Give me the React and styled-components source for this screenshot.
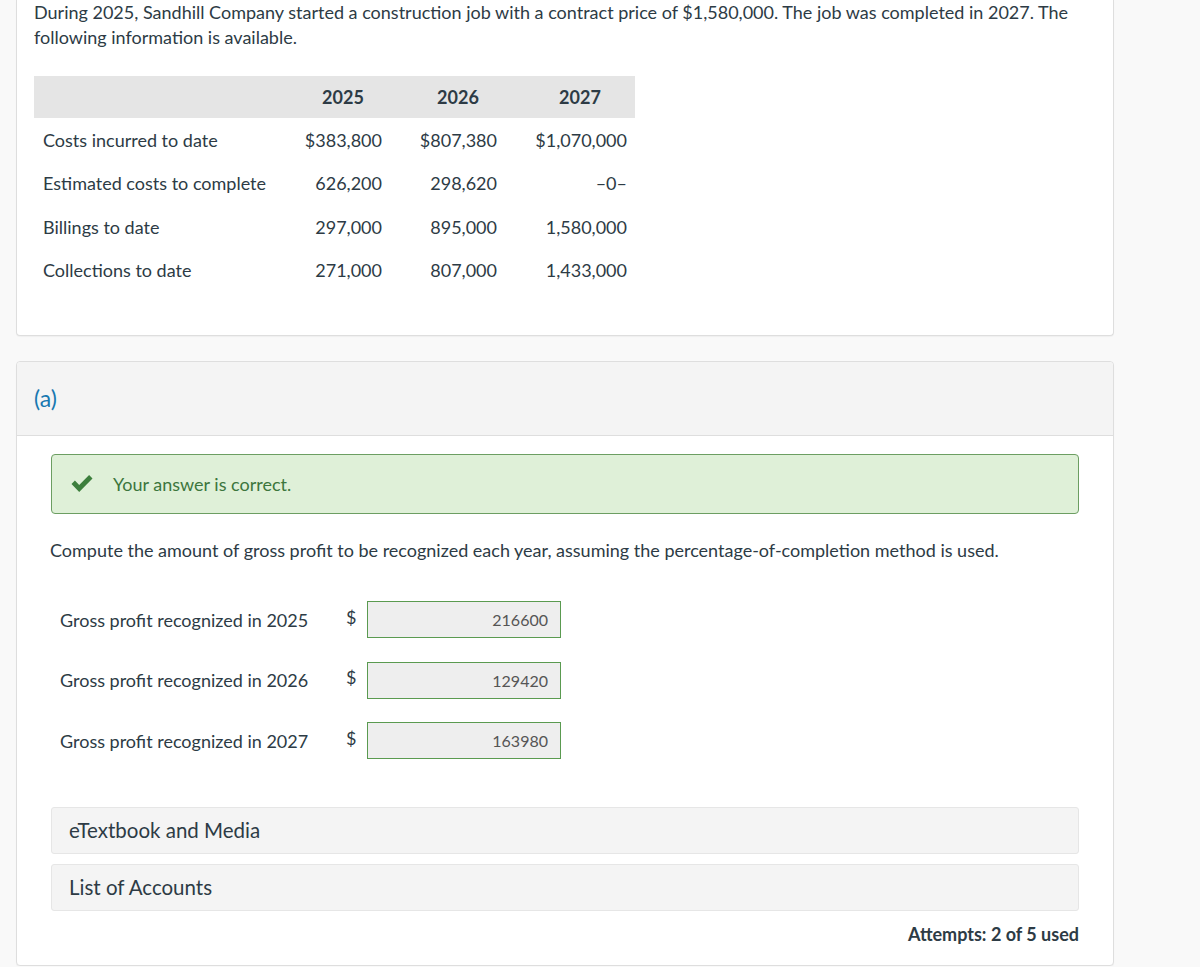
import React from 'react';
import styled, { createGlobalStyle } from 'styled-components';

const GlobalStyle = createGlobalStyle`
  body {
    margin: 0;
    background: #f9f9f9;
    font-family: Lato, "Open Sans", sans-serif;
    color: #2d3b45;
  }
`;

const rows = [
  { label: 'Costs incurred to date', values: ['$383,800', '$807,380', '$1,070,000'] },
  { label: 'Estimated costs to complete', values: ['626,200', '298,620', '\u20130\u2013'] },
  { label: 'Billings to date', values: ['297,000', '895,000', '1,580,000'] },
  { label: 'Collections to date', values: ['271,000', '807,000', '1,433,000'] },
];

const years = ['2025', '2026', '2027'];
const colPad = [9, 28, 8];

const answers = [
  { year: '2025', value: '216600' },
  { year: '2026', value: '129420' },
  { year: '2027', value: '163980' },
];

const App = () => {
  return (
    <Page>
      <GlobalStyle />
      <Card top>
        <Intro>
          During 2025, Sandhill Company started a construction job with a contract price of $1,580,000. The job was
          completed in 2027. The following information is available.
        </Intro>
        <Table>
          <HeadCell />
          {years.map((y) => (
            <HeadCell key={y}>{y}</HeadCell>
          ))}
          {rows.map((r) => (
            <React.Fragment key={r.label}>
              <LabelCell>{r.label}</LabelCell>
              {r.values.map((v, i) => (
                <ValueCell key={i} pad={colPad[i]}>
                  {v}
                </ValueCell>
              ))}
            </React.Fragment>
          ))}
        </Table>
      </Card>

      <Card>
        <PartHeader>(a)</PartHeader>
        <PartBody>
          <Alert>
            <svg width="22" height="17" viewBox="0 0 22 17">
              <path d="M0.5 9 L3.9 5.6 L8.2 9.9 L18.1 0 L21.5 3.4 L8.2 16.9 Z" fill="#3d7f3d" />
            </svg>
            <span>Your answer is correct.</span>
          </Alert>
          <Question>
            Compute the amount of gross profit to be recognized each year, assuming the percentage-of-completion method is
            used.
          </Question>
          <Answers>
            {answers.map((a) => (
              <AnswerRow key={a.year}>
                <AnswerLabel>Gross profit recognized in {a.year}</AnswerLabel>
                <Dollar>$</Dollar>
                <AnswerBox>{a.value}</AnswerBox>
              </AnswerRow>
            ))}
          </Answers>
          <Resources>
            <Resource>eTextbook and Media</Resource>
            <Resource>List of Accounts</Resource>
          </Resources>
          <Attempts>Attempts: 2 of 5 used</Attempts>
        </PartBody>
      </Card>
    </Page>
  );
};

export default App;

const Page = styled.div`
  width: 1098px;
  margin-left: 16px;
  display: flex;
  flex-direction: column;
  gap: 25px;
`;

const Card = styled.div`
  background: #fff;
  border: 1px solid #dedede;
  border-top: ${(p) => (p.top ? 'none' : '1px solid #dedede')};
  border-radius: ${(p) => (p.top ? '0 0 4px 4px' : '4px')};
  box-shadow: 0 1px 1px rgba(0, 0, 0, 0.04);
  padding-bottom: ${(p) => (p.top ? '41px' : '0')};
`;

const Intro = styled.p`
  margin: 0;
  padding: 0 30px 0 17px;
  font-size: 18px;
  line-height: 25px;
`;

const Table = styled.div`
  margin: 26px 0 0 17px;
  display: grid;
  grid-template-columns: 261px 96px 134px 110px;
  grid-auto-rows: 43.5px;
  font-size: 18px;
`;

const HeadCell = styled.div`
  background: #e5e5e5;
  font-weight: 700;
  display: flex;
  align-items: center;
  justify-content: center;
  height: 42px;
`;

const LabelCell = styled.div`
  display: flex;
  align-items: center;
  padding-left: 9px;
  padding-bottom: 3px;
`;

const ValueCell = styled.div`
  display: flex;
  align-items: center;
  justify-content: flex-end;
  padding-right: ${(p) => p.pad}px;
  padding-bottom: 3px;
`;

const PartHeader = styled.div`
  background: #f4f4f4;
  border-bottom: 1px solid #dedede;
  height: 73px;
  padding-left: 17px;
  display: flex;
  align-items: center;
  font-size: 23px;
  color: #1878b0;
  border-radius: 4px 4px 0 0;
`;

const PartBody = styled.div`
  padding: 18px 34px 20px 34px;
  display: flex;
  flex-direction: column;
`;

const Alert = styled.div`
  height: 58px;
  background: #dff0d8;
  border: 1px solid #6c9e62;
  border-radius: 4px;
  display: flex;
  align-items: center;
  gap: 20px;
  padding-left: 19px;
  font-size: 18px;
  color: #3c763d;
`;

const Question = styled.p`
  margin: 24px 0 0 -1px;
  font-size: 18px;
  line-height: 24px;
`;

const Answers = styled.div`
  margin-top: 39px;
  padding-left: 9px;
  display: flex;
  flex-direction: column;
  gap: 22.5px;
`;

const AnswerRow = styled.div`
  display: flex;
  align-items: center;
  height: 38px;
`;

const AnswerLabel = styled.div`
  width: 286px;
  font-size: 18px;
`;

const Dollar = styled.div`
  width: 21px;
  font-size: 18px;
  align-self: flex-start;
  margin-top: 5px;
`;

const AnswerBox = styled.div`
  width: 180px;
  height: 35px;
  background: #eeeeee;
  border: 1px solid #5a9a50;
  display: flex;
  align-items: center;
  justify-content: flex-end;
  padding-right: 12px;
  font-size: 16px;
  color: #555;
`;

const Resources = styled.div`
  margin-top: 47px;
  display: flex;
  flex-direction: column;
  gap: 10px;
`;

const Resource = styled.div`
  height: 45px;
  background: #f4f4f4;
  border: 1px solid #e6e6e6;
  border-radius: 3px;
  display: flex;
  align-items: center;
  padding-left: 17px;
  font-size: 20.5px;
`;

const Attempts = styled.div`
  margin-top: 12px;
  text-align: right;
  font-weight: 700;
  font-size: 18px;
`;
